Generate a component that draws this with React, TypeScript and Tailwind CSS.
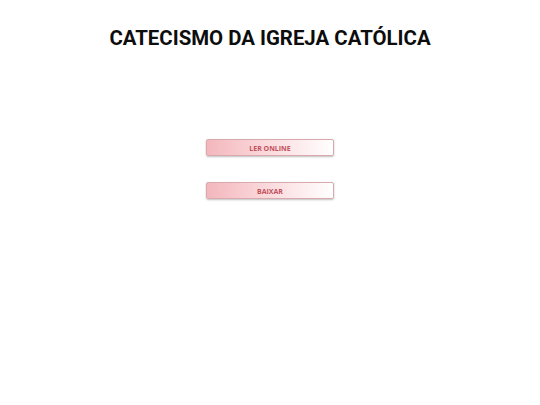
export default function App() {
  return (
    <div className="w-[540px] h-[405px] bg-white flex flex-col items-center">
      <h1
        className="mt-[26px] text-[20.4px] leading-[24px] font-bold text-[#0d0d0d]"
        style={{ fontFamily: "Roboto, sans-serif" }}
      >
        CATECISMO DA IGREJA CATÓLICA
      </h1>
      <div className="mt-[89px] flex flex-col gap-[26px]">
        {["LER ONLINE", "BAIXAR"].map((label) => (
          <button
            key={label}
            className="w-[128px] h-[17px] rounded-[2px] border border-[#d9a9ae] bg-gradient-to-r from-[#f3b7bd] to-white shadow-[0_1px_2px_rgba(0,0,0,0.25)] text-[7px] leading-none pt-[1px] font-bold text-[#c2515c] flex items-center justify-center"
            style={{ fontFamily: "'Open Sans', sans-serif" }}
          >
            {label}
          </button>
        ))}
      </div>
    </div>
  );
}
